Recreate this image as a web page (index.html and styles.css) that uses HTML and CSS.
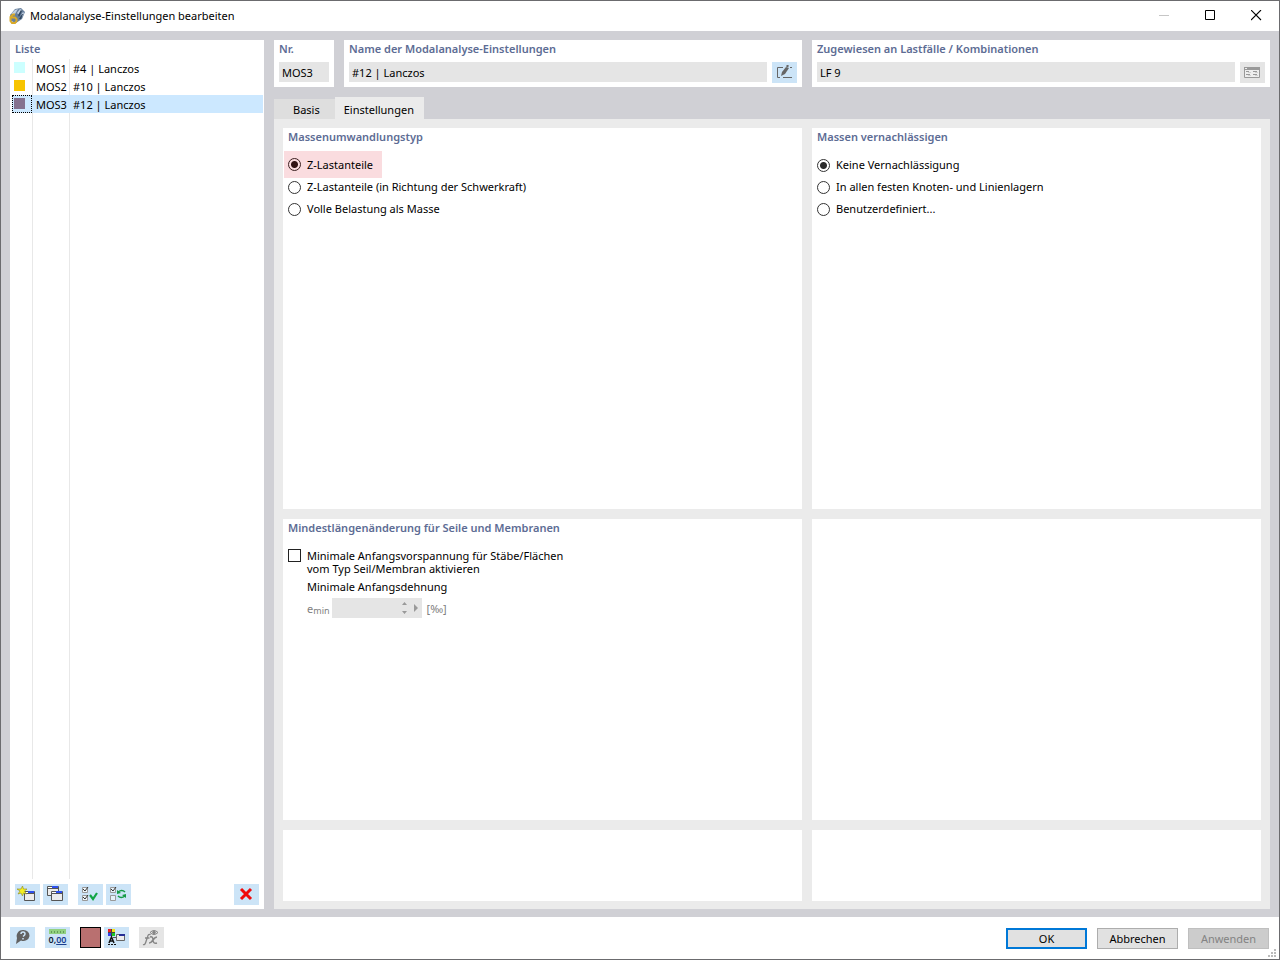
FILE: index.html
```html
<!DOCTYPE html>
<html lang="de">
<head>
<meta charset="utf-8">
<title>Modalanalyse-Einstellungen bearbeiten</title>
<link rel="stylesheet" href="styles.css">
</head>
<body>
<div class="window">
  <header class="titlebar">
    <svg class="app-icon" width="16" height="16" viewBox="0 0 16 16"><path d="m1 7 5-6 6-1 4 4-3 7-6 4-5-2z" fill="#667f9c"/><path d="m2 6 4-4 3-1-3 5zm6-1 3-4 2 1-3 5zm4 2 2-3 1 1-2 4z" fill="#c2d0e2"/><path d="m9 7 3-5 1 1-3 6zm1 4 3-5 1 0-2 5z" fill="#31465f"/><path d="M6 6.500H4L1.500 9v4L3 15h3l1.500-2v-2L6 9.500H2" fill="none" stroke="#d8a928" stroke-width="2"/></svg>
    <h1>Modalanalyse-Einstellungen bearbeiten</h1>
    <div class="window-controls">
      <button aria-label="Minimieren" disabled><svg width="11" height="11"><path d="M0 5.500h10" stroke="#c6c6c6"/></svg></button>
      <button aria-label="Maximieren"><svg width="11" height="11"><path d="M.5.500h9v9h-9z" fill="none" stroke="#000"/></svg></button>
      <button aria-label="Schließen"><svg width="11" height="11"><path d="m0 0 10 10m0-10-10 10" stroke="#000" stroke-width="1.100"/></svg></button>
    </div>
  </header>

  <main class="workspace">
    <section class="card list-card">
      <h2>Liste</h2>
      <div class="list">
        <table>
          <tbody>
            <tr><td class="mark"><i class="swatch cyan"></i></td><td class="code">MOS1</td><td>#4 | Lanczos</td></tr>
            <tr><td class="mark"><i class="swatch yellow"></i></td><td class="code">MOS2</td><td>#10 | Lanczos</td></tr>
            <tr class="selected"><td class="mark"><i class="swatch purple"></i></td><td class="code">MOS3</td><td>#12 | Lanczos</td></tr>
          </tbody>
        </table>
      </div>
      <div class="toolbar">
        <button class="tool" aria-label="Neu"><svg width="21" height="17" viewBox="0 0 21 17"><path d="M7.500 5.500h10v9h-10z" fill="#ececec" stroke="#555"/><path d="M8 6h9v1H8z" fill="#fff"/><path d="M11 5h6v2h-6z" fill="#2d50ee"/><path d="M7 7.500h11" stroke="#555"/><path d="m5.500 0 1 3H10L7.500 5l2 3-3-1-1 3-1.500-3L1 8l2-3L0 3h4z" fill="#f4ef21" stroke="#8d8920" stroke-width=".6"/></svg></button>
        <button class="tool" aria-label="Kopieren"><svg width="21" height="17" viewBox="0 0 21 17"><path d="M2.500.500h11v9h-11z" fill="#ececec" stroke="#555"/><path d="M3 1h10v1H3z" fill="#fff"/><path d="M7 0h6v2H7z" fill="#2d50ee"/><path d="M3 2.500h10" stroke="#555"/><path d="M6.500 5.500h11v9h-11z" fill="#ececec" stroke="#555"/><path d="M7 6h10v1H7z" fill="#fff"/><path d="M11 5h6v2h-6z" fill="#2d50ee"/><path d="M7 7.500h10" stroke="#555"/></svg></button>
        <button class="tool spaced" aria-label="Alle auswählen"><svg width="21" height="17" viewBox="0 0 21 17" fill="none"><path d="M2.500 1.500h5v5h-5zM2.500 9.500h5v5h-5z" fill="#eef5fa" stroke="#999"/><path d="m3 3 2 2 3-4M3 11l2 2 3-4" stroke="#333"/><path d="m10 9 3 4 4-6" stroke="#12a545" stroke-width="2.200"/></svg></button>
        <button class="tool" aria-label="Auswahl umkehren"><svg width="21" height="17" viewBox="0 0 21 17" fill="none"><path d="M2.500 1.500h5v5h-5zM2.500 9.500h5v5h-5z" fill="#e5f1fa" stroke="#999"/><path d="m3 3 2 2 3-4" stroke="#333"/><path d="M10 6q4-3 7 0M17 10q-4 3-7 0" stroke="#159b46" stroke-width="1.500"/><path d="m9 8 0-4 4 3zm9 0 0 4-4-3z" fill="#159b46"/></svg></button>
        <button class="tool end" aria-label="Löschen"><svg width="19" height="17" viewBox="0 0 19 17"><path d="m4 3 10 10m0-10L4 13" stroke="#f00b0b" stroke-width="3"/></svg></button>
      </div>
    </section>

    <div class="editor">
      <div class="head">
        <section class="card"><h2><label for="nr">Nr.</label></h2><div class="field"><input id="nr" value="MOS3" readonly></div></section>
        <section class="card"><h2><label for="name">Name der Modalanalyse-Einstellungen</label></h2><div class="field"><input id="name" value="#12 | Lanczos" readonly><button class="tool" aria-label="Name bearbeiten"><svg width="17" height="15" viewBox="0 0 17 15" fill="none"><path d="M7 2.500H1.500v10H4M7 12.500h9M14 2.500h2" stroke="#666"/><path d="m5 11 1-4 4-5 3 1-4 6z" fill="#666"/><path d="m10.500.500 2 1" stroke="#666" stroke-width="2"/></svg></button></div></section>
        <section class="card"><h2><label for="assigned">Zugewiesen an Lastfälle / Kombinationen</label></h2><div class="field"><input id="assigned" value="LF 9" readonly><button class="tool muted" aria-label="Zuweisung bearbeiten" disabled><svg width="17" height="13" viewBox="0 0 17 13"><path d="M.5 1.500h15v10H.5z" fill="#eee" stroke="#999"/><path d="M0 1h16v3H0z" fill="#999"/><path d="M1 2h2v1H1z" fill="#eee"/><path d="M2 5.500h3M9 5.500h4M2 8.500h4M9 8.500h4" stroke="#999"/><path d="M4 6.500h3M11 6.500h3M4 9.500h3M11 9.500h3" stroke="#d0d0d0"/></svg></button></div></section>
      </div>

      <div class="tabs" role="tablist">
        <button role="tab" aria-selected="false">Basis</button>
        <button role="tab" aria-selected="true">Einstellungen</button>
      </div>

      <div class="panels" role="tabpanel">
        <section class="card">
          <h2>Massenumwandlungstyp</h2>
          <div class="choices">
            <label class="highlight"><input type="radio" name="mass" checked>Z-Lastanteile</label>
            <label><input type="radio" name="mass">Z-Lastanteile (in Richtung der Schwerkraft)</label>
            <label><input type="radio" name="mass">Volle Belastung als Masse</label>
          </div>
        </section>
        <section class="card">
          <h2>Massen vernachlässigen</h2>
          <div class="choices">
            <label><input type="radio" name="neglect" checked>Keine Vernachlässigung</label>
            <label><input type="radio" name="neglect">In allen festen Knoten- und Linienlagern</label>
            <label><input type="radio" name="neglect">Benutzerdefiniert...</label>
          </div>
        </section>
        <section class="card">
          <h2>Mindestlängenänderung für Seile und Membranen</h2>
          <label class="check"><input type="checkbox"><span>Minimale Anfangsvorspannung für Stäbe/Flächen<br>vom Typ Seil/Membran aktivieren</span></label>
          <div class="strain">
            <span>Minimale Anfangsdehnung</span>
            <div class="strain-row">
              <label for="emin">e<sub>min</sub></label>
              <div class="spin">
                <input id="emin" disabled>
                <button aria-label="Wert ändern" disabled><svg width="7" height="14"><path d="M1 4h5L3.500 1zM1 10h5l-2.500 3z" fill="#999"/></svg></button>
                <button aria-label="Mehr" disabled><svg width="6" height="8"><path d="m1 0 4 4-4 4z" fill="#999"/></svg></button>
              </div>
              <span>[‰]</span>
            </div>
          </div>
        </section>
        <section class="card"></section>
        <section class="card"></section>
        <section class="card"></section>
      </div>
    </div>
  </main>

  <footer class="footer">
    <button class="tool" aria-label="Hilfe"><svg width="17" height="17" viewBox="0 0 17 17"><path d="M9 1a6 5.500 0 1 1-2 10.500L2 15l1-6A6 6 0 0 1 9 1" fill="#626262"/><path d="M7 5q0-2 2-2t2 2q0 1-2 2.500M9 9v1.500" fill="none" stroke="#cce4f7" stroke-width="1.500"/></svg></button>
    <button class="tool spaced decimals" aria-label="Einheiten und Dezimalstellen"><svg width="17" height="5"><path d="M0 0h17v5H0z" fill="#91d181"/><path d="M2.500 2v2m3-2v2m3-2v2m3-2v2m3-2v2" stroke="#639d59"/></svg><span>0,<u>00</u></span></button>
    <button class="color spaced" aria-label="Farbe"></button>
    <button class="tool" aria-label="Anzeigeeigenschaften"><svg width="21" height="17" viewBox="0 0 21 17"><path d="M2 0h7v7H2z" fill="#444"/><path d="M2 0h3v3H2z" fill="#ef1c23"/><path d="M6 0h3v3H6z" fill="#f2e318"/><path d="M2 4h3v3H2z" fill="#353de8"/><path d="M6 4h3v3H6z" fill="#19c927"/><path d="M3 14 5.500 8 8 14M4 12h3" stroke="#111" stroke-width="1.500" fill="none"/><path d="M2 15.500h2m1 0h2m1 0h2" stroke="#111"/><path d="M10.500 5.500h8v6h-8z" fill="#ececec" stroke="#666"/><path d="M13 5h6v2h-6z" fill="#252f96"/><path d="M7 8.500h3" stroke="#555"/></svg></button>
    <button class="tool muted spaced" aria-label="Formel" disabled><svg width="21" height="17" viewBox="0 0 21 17" fill="none" stroke="#858585"><path d="M2 15.500q2 1 3-3L6.500 8q1-4 3-2M4 9h4.500" stroke-width="1.300"/><path d="M9 8q3-1 3 3t4 3M16 8q-2 0-4 3t-4 3" stroke-width="1.500"/><path d="M9 3.500q4-4 8 0-4 4-8 0"/><circle cx="13" cy="3.500" r="1.300" fill="#858585"/></svg></button>
    <div class="actions">
      <button class="primary">OK</button>
      <button>Abbrechen</button>
      <button disabled>Anwenden</button>
    </div>
    <svg class="grip" width="8" height="8"><path d="M6 0h2v2H6zM3 3h2v2H3zM6 3h2v2H6zM0 6h2v2H0zM3 6h2v2H3zM6 6h2v2H6z" fill="#bbb"/></svg>
  </footer>
</div>
</body>
</html>
```
FILE: styles.css
```css
* { box-sizing: border-box; }
body { margin: 0; font: 11px/18px "Noto Sans", "Open Sans", sans-serif; color: #000; }
button, input { font: inherit; color: inherit; margin: 0; padding: 0; border: 0; }
h1, h2 { margin: 0; font-size: 11px; }
svg { display: block; }

.window { min-height: 100vh; display: flex; flex-direction: column; border: 1px solid #6b6b6e; background: #fff; }
.titlebar { display: flex; align-items: center; height: 30px; padding-left: 8px; gap: 5px; }
.titlebar h1 { font-weight: 400; }
.window-controls { display: flex; margin-left: auto; }
.window-controls button { width: 46px; height: 30px; padding-bottom: 1px; display: grid; place-items: center; background: none; }

.workspace { flex: 1; display: flex; gap: 10px; padding: 9px 9px 8px; background: #d0d0d5; }
.card { background: #fff; padding: 0 5px; min-width: 0; }
.card h2 { color: #5d6c94; font-weight: 600; line-height: 18px; }

.list-card { flex: 0 0 254px; padding: 0; display: flex; flex-direction: column; }
.list-card h2 { padding: 0 5px; height: 19px; }
.list { flex: 1; padding: 0 1px 0 2px; background: linear-gradient(#e8e8e8, #e8e8e8) 22px 0 / 1px 100% no-repeat, linear-gradient(#e8e8e8, #e8e8e8) 59px 0 / 1px 100% no-repeat; }
.list table { width: 100%; border-collapse: collapse; table-layout: fixed; }
.list td { height: 18px; padding: 2px 0 0 3px; line-height: 16px; }
.list .mark { width: 20px; padding: 3px 2px 0; vertical-align: top; }
.list .code { width: 38px; padding-left: 4px; white-space: nowrap; }
.selected { background: #cce8ff; }
.selected .mark { outline: 1px dotted #000; outline-offset: -1px; }
.swatch { display: block; width: 11px; height: 11px; }
.cyan { background: #ccffff; }
.yellow { background: #f7c400; }
.purple { background: #84718f; }

.toolbar { display: flex; gap: 3px; padding: 5px 5px 4px; }
.tool { flex: none; width: 25px; height: 21px; display: grid; place-items: center; background: #cce4f7; }
.muted { background: #e5e5e5; }
.spaced { margin-left: 7px; }
.end { margin-left: auto; }

.editor { flex: 1; min-width: 0; display: flex; flex-direction: column; }
.head { display: grid; grid-template-columns: 60px 1fr 1fr; gap: 10px; }
.head .card { height: 47px; }
.field { display: flex; gap: 5px; margin-top: 4px; }
.field input { flex: 1; min-width: 0; width: 100%; height: 20px; padding: 0 3px; background: #e5e5e5; outline: 0; }

.tabs { display: flex; align-items: flex-end; margin-top: 10px; }
.tabs button { height: 20px; padding: 2px 15px 0 19px; background: #dedede; }
.tabs button[aria-selected="true"] { height: 22px; padding: 4px 10px 0 9px; background: #ebebeb; }
.panels { flex: 1; display: grid; grid-template-columns: 519fr 449fr; grid-template-rows: 381fr 301fr 71fr; gap: 10px; padding: 9px 9px 8px; background: #ebebeb; }

.choices { display: flex; flex-direction: column; align-items: flex-start; margin-top: 8px; }
.choices label { display: flex; align-items: center; gap: 6px; height: 22px; }
.choices .highlight { height: 27px; margin: -3px -5px -2px -4px; padding: 0 9px 0 4px; background: #fadcdf; }
input[type="radio"] { appearance: none; width: 13px; height: 13px; border: 1px solid #333; border-radius: 50%; background: #fff; }
input[type="radio"]:checked { background: radial-gradient(circle, #2b2b2b 3px, transparent 4px) #fff; }
.highlight input[type="radio"]:checked { border-color: #3a2020; background: radial-gradient(circle, #321414 3px, transparent 4px); }
.check { display: flex; gap: 6px; margin-top: 12px; line-height: 13px; }
input[type="checkbox"] { appearance: none; flex: none; width: 13px; height: 13px; border: 1px solid #222; background: #fff; }
.strain { padding-left: 19px; margin-top: 5px; line-height: 13px; }
.strain > span { display: block; }
.strain-row { display: flex; align-items: center; margin-top: 5px; color: #808080; }
.strain-row sub { font-size: 9px; line-height: 1; vertical-align: -1px; }
.spin { display: flex; align-items: center; width: 90px; height: 20px; margin: 0 5px 0 2px; padding-right: 3px; gap: 5px; background: #e5e5e5; }
.spin input { flex: 1; min-width: 0; height: 20px; background: transparent; }
.spin button { background: none; }

.footer { position: relative; display: flex; align-items: flex-start; gap: 3px; height: 42px; padding: 10px 10px 0 9px; }
.decimals { align-content: center; font-size: 9px; font-weight: 600; line-height: 12px; color: #123; }
.decimals u { color: #1a3f91; }
.color { width: 21px; height: 21px; border: 1px solid #000; background: #b97070; }
.actions { display: flex; gap: 10px; margin-left: auto; padding-top: 1px; }
.actions button { width: 81px; height: 21px; border: 1px solid #adadad; background: #e1e1e1; line-height: 17px; }
.actions .primary { border: 2px solid #0078d7; }
.actions button:disabled { border-color: #bfbfbf; background: #ccc; color: #838383; }
.grip { position: absolute; right: 3px; bottom: 2px; }
```
